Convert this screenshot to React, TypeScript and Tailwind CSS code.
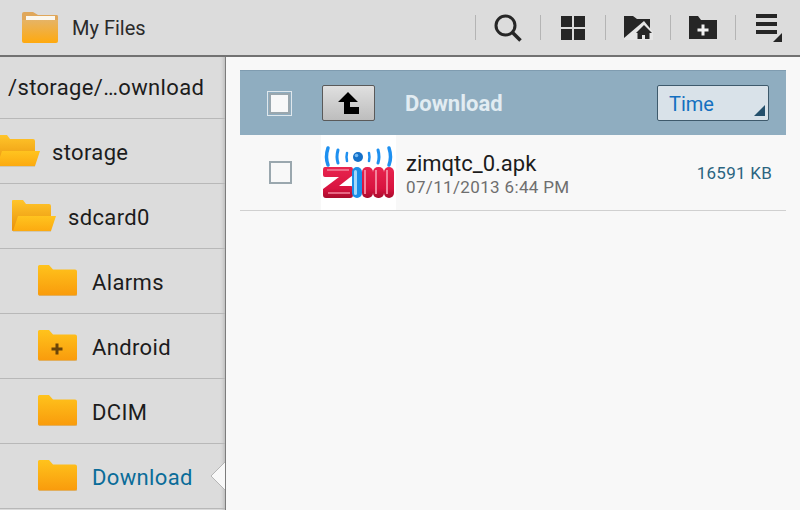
const OpenFolder = () => (
  <svg width="44" height="34" viewBox="0 0 44 34" className="shrink-0">
    <defs>
      <linearGradient id="openBack" x1="0" y1="0" x2="0" y2="1">
        <stop offset="0" stopColor="#ffc52a" />
        <stop offset="1" stopColor="#e8900c" />
      </linearGradient>
      <linearGradient id="openFront" x1="0" y1="0" x2="0" y2="1">
        <stop offset="0" stopColor="#ffc41f" />
        <stop offset="1" stopColor="#fcaa10" />
      </linearGradient>
    </defs>
    <path d="M0 2q0-1 1-1h10l3 4h23q2 0 2 2v25H1q-1 0-1-1z" fill="url(#openBack)" />
    <path d="M6 17h38l-5 15H1z" fill="url(#openFront)" />
    <path d="M1 32h38v1H1z" fill="#cfc7b4" />
  </svg>
);

const Folder = ({ plus = false }: { plus?: boolean }) => (
  <svg width="40" height="32" viewBox="0 0 40 32" className="shrink-0">
    <defs>
      <linearGradient id="closedFolder" x1="0" y1="0" x2="0" y2="1">
        <stop offset="0" stopColor="#ffc31c" />
        <stop offset="1" stopColor="#f99b0c" />
      </linearGradient>
    </defs>
    <path d="M1 3h10l4 4h22q2 0 2 2v22H1z" fill="#c9c3b4" />
    <path d="M0 1.500Q0 0 1.500 0H11l4 4.500h22q2 0 2 2V29q0 1.500-2 1.500H1.500Q0 30.500 0 29z" fill="url(#closedFolder)" />
    {plus && <path d="M17.500 13.500h3v4h4v3h-4v4h-3v-4h-4v-3h4z" fill="#6b4408" />}
  </svg>
);

const Divider = () => <div className="h-[25px] w-px shrink-0 bg-[#b4b4b4]" />;

const TreeRow = ({
  label,
  indent,
  icon,
  active = false,
}: {
  label: string;
  indent: string;
  icon: React.ReactNode;
  active?: boolean;
}) => (
  <div className={"flex h-[65px] shrink-0 items-center border-b border-[#b8b8b8] " + indent}>
    {icon}
    <span className={"pt-[2px] text-[22px] tracking-[0.35px] " + (active ? "text-[#0a6c99]" : "text-[#1c1c1c]")}>{label}</span>
  </div>
);

const ZimLogo = () => (
  <svg width="75" height="75" viewBox="0 0 75 75" className="shrink-0 bg-white">
    <defs>
      <linearGradient id="zimRed" x1="0" y1="0" x2="0" y2="1">
        <stop offset="0" stopColor="#e8254f" />
        <stop offset="0.7" stopColor="#d8133f" />
        <stop offset="1" stopColor="#a80c2c" />
      </linearGradient>
    </defs>
    <g fill="none" stroke="#1e90f0" strokeLinecap="round">
      <path d="M7 13q-3 9 0 17" strokeWidth="3.500" />
      <path d="M17 15q-2 7 0 13" strokeWidth="3" />
      <path d="M26 18q-1 4 0 8" strokeWidth="2.500" />
      <path d="M48 18q1 4 0 8" strokeWidth="2.500" />
      <path d="M57 15q2 7 0 13" strokeWidth="3" />
      <path d="M68 13q3 9 0 17" strokeWidth="3.500" />
    </g>
    <circle cx="37" cy="22" r="5" fill="#1571c9" />
    <circle cx="35.500" cy="20.500" r="1.800" fill="#74b9f2" />
    <path d="M4 32h26q2 0 2 3v5L18 51h12q2 0 2 3v6q0 3-3 3H5q-3 0-3-3v-6l16-12H4q-2 0-2-2v-5q0-3 2-3z" fill="url(#zimRed)" />
    <path d="M6 35h22M7 58h22" stroke="#f2849c" strokeWidth="1.500" />
    <rect x="31" y="32" width="10" height="31" rx="5" fill="#1b8ee8" />
    <rect x="33" y="35" width="3" height="25" rx="1.500" fill="#a5d8fa" />
    <rect x="41" y="32" width="11" height="31" rx="5" fill="url(#zimRed)" />
    <rect x="52" y="32" width="11" height="31" rx="5" fill="url(#zimRed)" />
    <rect x="63" y="32" width="10" height="31" rx="5" fill="url(#zimRed)" />
    <rect x="43" y="35" width="2" height="24" fill="#f2849c" />
    <rect x="54" y="35" width="2" height="24" fill="#f2849c" />
    <rect x="65" y="35" width="2" height="24" fill="#f2849c" />
  </svg>
);

export default function App() {
  return (
    <div className="flex h-[510px] w-[800px] flex-col overflow-hidden bg-[#f8f8f8] font-['Roboto',sans-serif]">
      <header className="flex h-[57px] shrink-0 items-center border-b-2 border-[#727272] bg-[#dcdcdc]">
        <svg width="38" height="33" viewBox="0 0 38 33" className="ml-[21px] shrink-0">
          <defs>
            <linearGradient id="appFolder" x1="0" y1="0" x2="0" y2="1">
              <stop offset="0" stopColor="#e6b465" />
              <stop offset="1" stopColor="#ffa90e" />
            </linearGradient>
          </defs>
          <path d="M1 3q0-2 2-2h9l5 3h19q1 0 1 2v6H1z" fill="#e0a75a" />
          <path d="M5 5h29v6H5z" fill="#fbf7ee" />
          <path d="M1 9h36v21q0 2-2 2H3q-2 0-2-2z" fill="url(#appFolder)" />
        </svg>
        <span className="ml-[13px] text-[20px] text-[#2a2a2a]">My Files</span>
        <div className="ml-auto mr-[17px] flex items-center">
          <Divider />
          <div className="flex w-[64px] justify-center">
            <svg width="30" height="30" viewBox="0 0 30 30">
              <circle cx="12.500" cy="12.500" r="9.500" fill="none" stroke="#262626" strokeWidth="3" />
              <path d="M19.500 19.500l8 8" stroke="#262626" strokeWidth="3.500" />
            </svg>
          </div>
          <Divider />
          <div className="flex w-[64px] justify-center">
            <svg width="24" height="24" viewBox="0 0 24 24" fill="#262626">
              <rect width="11" height="11" />
              <rect x="13" width="11" height="11" />
              <rect y="13" width="11" height="11" />
              <rect x="13" y="13" width="11" height="11" />
            </svg>
          </div>
          <Divider />
          <div className="flex w-[64px] justify-center">
            <svg width="30" height="24" viewBox="0 0 30 24">
              <path d="M1 0h9l4 3h13v19H1z" fill="#262626" />
              <path d="M1 22L21 5l9 11v8H1z" fill="#e6e6e6" />
              <path d="M21 9l8 8h-2.500v6H22v-4h-3v4h-4.500v-6H13z" fill="#262626" />
            </svg>
          </div>
          <Divider />
          <div className="flex w-[64px] justify-center">
            <svg width="28" height="23" viewBox="0 0 28 23">
              <path d="M0 0h9l3 4h16v19H0z" fill="#262626" />
              <path d="M12.500 8.500h3v4h4v3h-4v4h-3v-4h-4v-3h4z" fill="#f2f2f2" />
            </svg>
          </div>
          <Divider />
          <div className="flex w-[47px] justify-end">
            <svg width="28" height="28" viewBox="0 0 28 28" fill="#262626">
              <rect x="1" y="0" width="21" height="4" />
              <rect x="1" y="8" width="21" height="4" />
              <rect x="1" y="16" width="21" height="4" />
              <path d="M27 19v9h-9z" />
            </svg>
          </div>
        </div>
      </header>

      <div className="flex min-h-0 flex-1">
        <aside className="relative flex w-[226px] shrink-0 flex-col overflow-hidden border-r border-[#7c7c7c] bg-[#dcdcdc] shadow-[inset_-4px_0_4px_-3px_rgba(0,0,0,0.18)]">
          <div className="flex h-[62px] shrink-0 items-center border-b border-[#b8b8b8] pl-[8px] text-[22px] tracking-[0.35px] text-[#1c1c1c]">
            /storage/…ownload
          </div>
          <TreeRow label="storage" indent="pl-0" icon={<div className="-ml-[4px] mr-[12px] flex"><OpenFolder /></div>} />
          <TreeRow label="sdcard0" indent="pl-[12px]" icon={<div className="mr-[12px] flex"><OpenFolder /></div>} />
          <TreeRow label="Alarms" indent="pl-[38px]" icon={<div className="mr-[14px] flex"><Folder /></div>} />
          <TreeRow label="Android" indent="pl-[38px]" icon={<div className="mr-[14px] flex"><Folder plus /></div>} />
          <TreeRow label="DCIM" indent="pl-[38px]" icon={<div className="mr-[14px] flex"><Folder /></div>} />
          <TreeRow label="Download" indent="pl-[38px]" active icon={<div className="mr-[14px] flex"><Folder /></div>} />
          <svg width="16" height="30" viewBox="0 0 16 30" className="absolute bottom-[19px] right-[-1px]">
            <path d="M16 0L1 15l15 15z" fill="#f8f8f8" />
            <path d="M16 0L1 15l15 15" fill="none" stroke="#b5b5b5" />
          </svg>
        </aside>

        <main className="flex min-w-0 flex-1 flex-col px-[14px] pt-[13px]">
          <div className="flex h-[65px] shrink-0 items-center border-t border-[#7f9cb0] bg-[#8fadc0]">
            <div className="ml-[27px] flex h-[25px] w-[25px] items-center justify-center border border-[#dfe7ec] bg-[#8fadc0]">
              <div className="h-[21px] w-[21px] border-[2px] border-[#9aa7ae] bg-[#f8f8f8]" />
            </div>
            <button className="ml-[30px] flex h-[36px] w-[53px] items-center justify-center rounded-[2px] border border-[#5a5a5a] bg-gradient-to-b from-[#e0e0e0] to-[#bdbdbd]">
              <svg width="21" height="22" viewBox="0 0 21 22">
                <path d="M10 0L20 10h-8v5h9v7H6V10H0z" fill="#000" />
              </svg>
            </button>
            <span className="ml-[30px] pt-[1px] text-[22px] font-bold text-[#e2ecf2]">Download</span>
            <div className="relative ml-auto mr-[17px] flex h-[36px] w-[112px] items-center rounded-[2px] border border-[#3e5a6c] bg-[#d9e2e9] pl-[11px] pt-[1px] text-[20px] text-[#1470c0]">
              Time
              <div className="absolute bottom-[4px] right-[3px] h-[11px] w-[11px] bg-[#24506c] [clip-path:polygon(100%_0,100%_100%,0_100%)]" />
            </div>
          </div>
          <div className="flex h-[76px] shrink-0 items-center border-b border-[#d0d0d0]">
            <div className="ml-[29px] h-[23px] w-[23px] shrink-0 border-[2px] border-[#9aa7ae]" />
            <div className="ml-[29px] flex">
              <ZimLogo />
            </div>
            <div className="ml-[10px] flex flex-col pt-[3px]">
              <span className="text-[22px] leading-[26px] text-[#1c1c1c]">zimqtc_0.apk</span>
              <span className="text-[17px] leading-[20px] tracking-[0.35px] text-[#6e6e6e]">07/11/2013 6:44 PM</span>
            </div>
            <span className="ml-auto mr-[14px] pt-[2px] text-[17px] tracking-[0.25px] text-[#2b6480]">16591 KB</span>
          </div>
        </main>
      </div>
    </div>
  );
}
